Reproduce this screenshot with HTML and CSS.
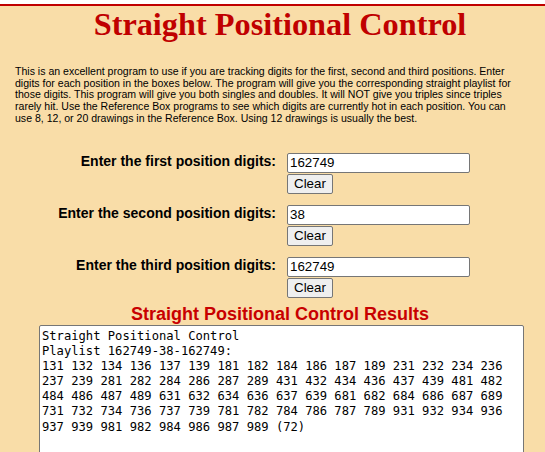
FILE: index.html
```html
<!DOCTYPE html>
<html lang="en">
<head>
    <meta charset="UTF-8">
    <title>Straight Positional Control</title>
    <link rel="stylesheet" href="styles.css">
</head>
<body>
    <div class="page">
        <h1 class="page-title">Straight Positional Control</h1>

        <p class="intro">
            This is an excellent program to use if you are tracking digits for the first, second and third positions. Enter
            digits for each position in the boxes below. The program will give you the corresponding straight playlist for
            those digits. This program will give you both singles and doubles. It will NOT give you triples since triples
            rarely hit. Use the Reference Box programs to see which digits are currently hot in each position. You can
            use 8, 12, or 20 drawings in the Reference Box. Using 12 drawings is usually the best.
        </p>

        <div class="entry-grid">
            <label class="entry-label" for="pos1">Enter the first position digits:</label>
            <div class="entry-field">
                <input type="text" id="pos1" class="digits-input" value="162749">
                <button class="clear-button" data-target="pos1">Clear</button>
            </div>

            <label class="entry-label" for="pos2">Enter the second position digits:</label>
            <div class="entry-field">
                <input type="text" id="pos2" class="digits-input" value="38">
                <button class="clear-button" data-target="pos2">Clear</button>
            </div>

            <label class="entry-label" for="pos3">Enter the third position digits:</label>
            <div class="entry-field">
                <input type="text" id="pos3" class="digits-input" value="162749">
                <button class="clear-button" data-target="pos3">Clear</button>
            </div>
        </div>

        <h2 class="results-title">Straight Positional Control Results</h2>
        <textarea class="results-box" id="results" spellcheck="false"></textarea>
    </div>

    <script>
        const inputs = ['pos1', 'pos2', 'pos3'].map(id => document.getElementById(id));
        const results = document.getElementById('results');

        // Build the straight playlist: singles and doubles, no triples
        function buildPlaylist() {
            const digits = inputs.map(input => input.value.replace(/\D/g, '').split(''));
            const combos = [];
            digits[0].forEach(a => {
                digits[1].forEach(b => {
                    digits[2].forEach(c => {
                        if (!(a === b && b === c)) combos.push(a + b + c);
                    });
                });
            });
            combos.sort();

            let lines = [];
            for (let i = 0; i < combos.length; i += 16) {
                lines.push(combos.slice(i, i + 16).join(' '));
            }
            const header = 'Straight Positional Control\nPlaylist ' +
                inputs.map(input => input.value).join('-') + ':\n';
            results.value = header + lines.join('\n') + ' (' + combos.length + ')';
        }

        document.querySelectorAll('.clear-button').forEach(button => {
            button.addEventListener('click', () => {
                document.getElementById(button.dataset.target).value = '';
                buildPlaylist();
            });
        });
        inputs.forEach(input => input.addEventListener('input', buildPlaylist));

        buildPlaylist();
    </script>
</body>
</html>
```

FILE: styles.css
```css
* {
    box-sizing: border-box;
}

body {
    margin: 0;
    padding-top: 4px;
    background: #ffffff;
    font-family: "Liberation Sans", Arial, sans-serif;
    overflow: hidden;
}

.page {
    background: #f9dda8;
    border-top: 2px solid #c00000;
    padding: 0 0 20px 15px;
    min-height: 446px;
}

.page-title {
    margin: 0;
    font-family: Georgia, "Liberation Serif", serif;
    font-size: 32.3px;
    line-height: 36px;
    font-weight: bold;
    color: #c00000;
    text-align: center;
}

.intro {
    margin: 24px 0 0;
    padding-right: 20px;
    font-size: 10.55px;
    line-height: 11.7px;
    color: #000;
}

.entry-grid {
    display: grid;
    grid-template-columns: 221px 183px;
    column-gap: 11px;
    row-gap: 11px;
    margin: 28px 0 0 40px;
}

.entry-label {
    font-size: 14px;
    font-weight: bold;
    line-height: 16px;
    text-align: right;
}

.entry-field {
    display: flex;
    flex-direction: column;
    align-items: flex-start;
    gap: 1px;
}

.digits-input {
    width: 183px;
    height: 20px;
    padding: 1px 2px;
    border: 1px solid #767676;
    border-radius: 2px;
    background: #fff;
    font-family: "Liberation Sans", Arial, sans-serif;
    font-size: 13.33px;
    color: #000;
}

.clear-button {
    height: 20px;
    padding: 0 6px;
    border: 1px solid #767676;
    border-radius: 2px;
    background: #efefef;
    font-family: "Liberation Sans", Arial, sans-serif;
    font-size: 13.33px;
    color: #000;
}

.results-title {
    margin: 6px 0 0;
    font-size: 18px;
    line-height: 21px;
    font-weight: bold;
    color: #c80000;
    text-align: center;
}

.results-box {
    display: block;
    width: 485px;
    height: 150px;
    margin: 0 0 0 24px;
    padding: 3px 2px 2px;
    border: 1px solid #767676;
    border-radius: 2px;
    background: #fff;
    font-family: "DejaVu Sans Mono", "Liberation Mono", monospace;
    font-size: 12.15px;
    line-height: 15.17px;
    color: #000;
    resize: none;
    overflow: hidden;
}
```
